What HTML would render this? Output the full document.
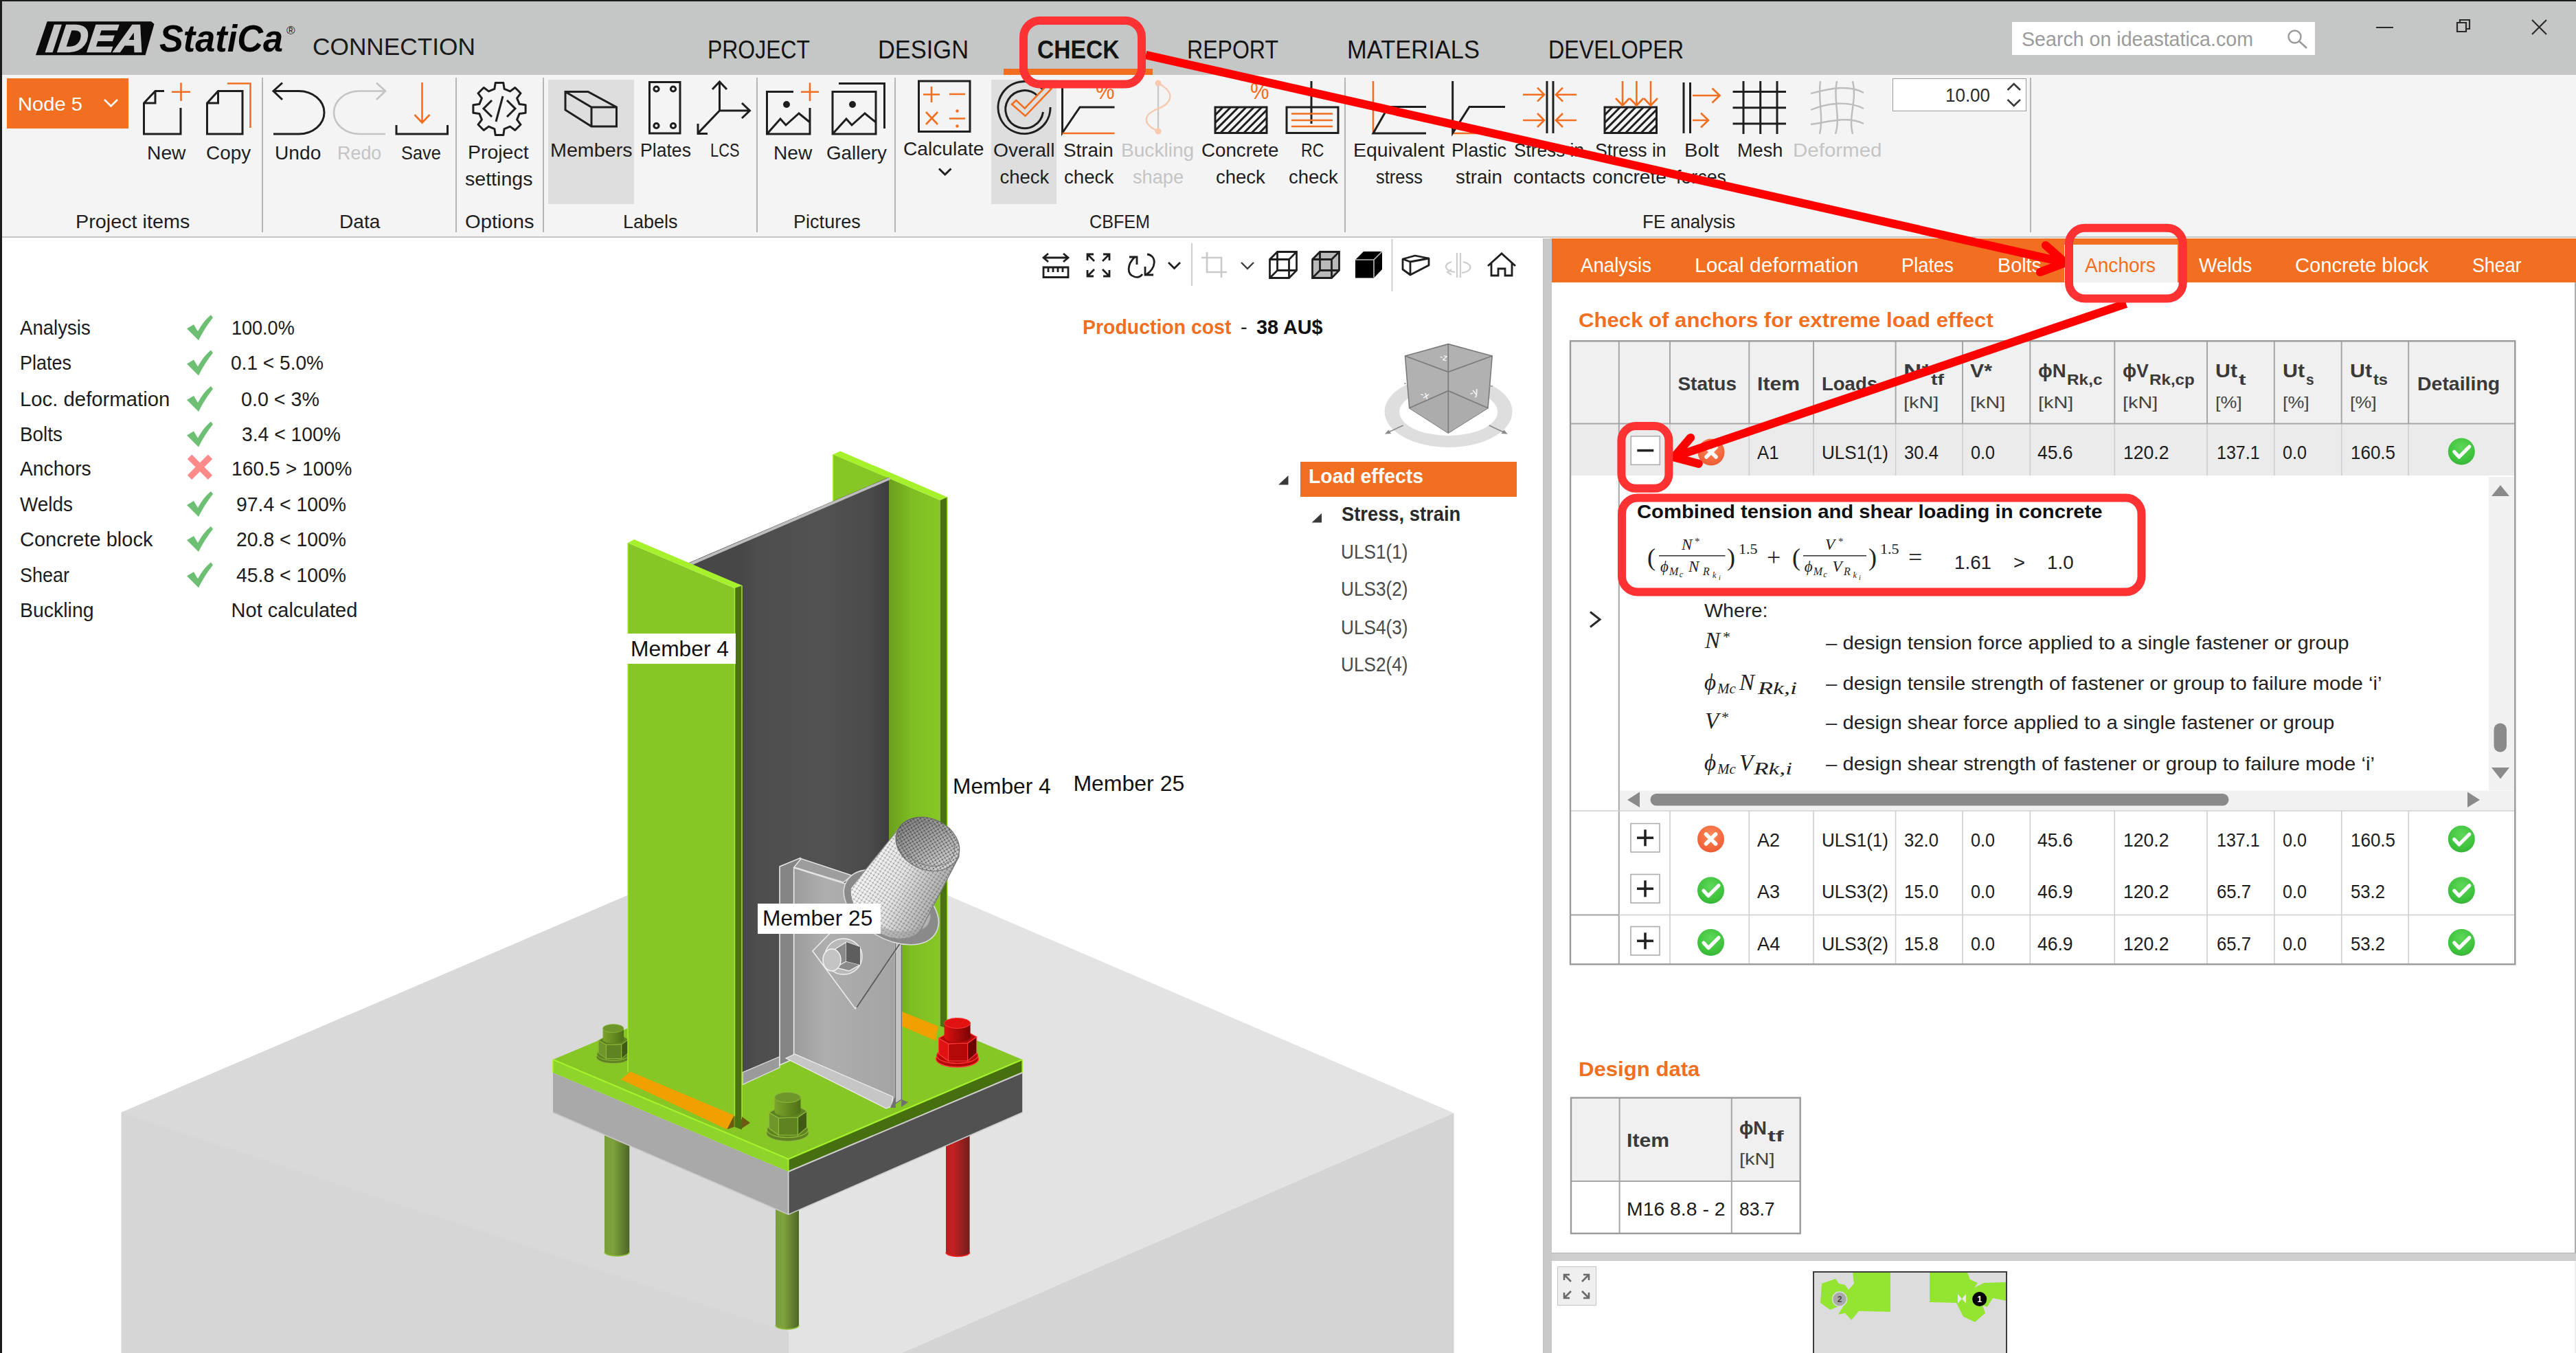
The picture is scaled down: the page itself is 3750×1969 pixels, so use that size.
<!DOCTYPE html>
<html lang="en">
<head>
<meta charset="utf-8">
<title>IDEA StatiCa Connection - Check - Anchors</title>
<style>
html,body{margin:0;padding:0;}
body{width:3750px;height:1969px;overflow:hidden;background:#fff;position:relative;font-family:'Liberation Sans', sans-serif;}
.a{position:absolute;box-sizing:border-box;}
.t{position:absolute;white-space:pre;line-height:1;transform-origin:0 0;}
svg{position:absolute;overflow:visible;}

</style>
</head>
<body>
<div class="a" style="left:0px;top:0px;width:3750px;height:1969px;background:#ffffff;"></div>
<div class="a" style="left:0px;top:0px;width:3750px;height:109px;background:#c5c7c6;"></div>
<div class="a" style="left:0px;top:109px;width:3750px;height:236px;background:#f4f4f4;"></div>
<div class="a" style="left:0px;top:344.3px;width:3750px;height:2.2px;background:#c6c6c6;"></div>
<svg style="left:0;top:0" width="460" height="109" viewBox="0 0 460 109"><polygon points="68.7,31.2 220,31.2 224.5,35 211.6,80.2 52,80.2" fill="#0a0a0a"/></svg>
<span class="t" style="left:64.5px;top:29.1px;font-family:'Liberation Sans', sans-serif;font-size:55.4px;font-weight:bold;font-style:italic;color:#c5c7c6;transform:skewX(-7deg) scaleX(1.0579);transform-origin:0 100%;-webkit-text-stroke:2.4px #c5c7c6;letter-spacing:1px;">IDEA</span>
<span class="t" style="left:232.0px;top:29.4px;font-family:'Liberation Sans', sans-serif;font-size:55px;font-weight:bold;font-style:italic;color:#050505;transform:scaleX(0.9499);">StatiCa</span>
<span class="t" style="left:417.0px;top:35.6px;font-family:'Liberation Sans', sans-serif;font-size:17px;color:#222;">®</span>
<span class="t" style="left:455.0px;top:50.5px;font-family:'Liberation Sans', sans-serif;font-size:34.5px;color:#1a1a1a;transform:scaleX(1.0219);">CONNECTION</span>
<span class="t" style="left:1030.0px;top:54.5px;font-family:'Liberation Sans', sans-serif;font-size:36.5px;color:#141414;transform:scaleX(0.8746);">PROJECT</span>
<span class="t" style="left:1278.0px;top:54.5px;font-family:'Liberation Sans', sans-serif;font-size:36.5px;color:#141414;transform:scaleX(0.9432);">DESIGN</span>
<span class="t" style="left:1509.5px;top:54.5px;font-family:'Liberation Sans', sans-serif;font-size:36.5px;font-weight:bold;color:#141414;transform:scaleX(0.9207);">CHECK</span>
<span class="t" style="left:1728.0px;top:54.5px;font-family:'Liberation Sans', sans-serif;font-size:36.5px;color:#141414;transform:scaleX(0.8783);">REPORT</span>
<span class="t" style="left:1961.0px;top:54.5px;font-family:'Liberation Sans', sans-serif;font-size:36.5px;color:#141414;transform:scaleX(0.9453);">MATERIALS</span>
<span class="t" style="left:2254.0px;top:54.5px;font-family:'Liberation Sans', sans-serif;font-size:36.5px;color:#141414;transform:scaleX(0.8829);">DEVELOPER</span>
<div class="a" style="left:1461px;top:100px;width:217px;height:9px;background:#f26f21;"></div>
<div class="a" style="left:2929px;top:32px;width:441px;height:47.5px;background:#ffffff;"></div>
<span class="t" style="left:2943.0px;top:41.7px;font-family:'Liberation Sans', sans-serif;font-size:29.5px;color:#9b9b9b;transform:scaleX(0.9694);">Search on ideastatica.com</span>
<svg style="left:3328px;top:41px" width="34" height="32" viewBox="0 0 34 32"><circle cx="12.5" cy="12.5" r="9" fill="none" stroke="#9a9a9a" stroke-width="2.4"/><path d="M19 19 L30 29" stroke="#9a9a9a" stroke-width="2.6" fill="none"/></svg>
<svg style="left:3450px;top:20px" width="270" height="40" viewBox="0 0 270 40"><path d="M9 20 H34" stroke="#2a2a2a" stroke-width="2" fill="none"/><path d="M127 13 H140 V26 H127 Z M131 13 V9 H145 V22 H140" stroke="#2a2a2a" stroke-width="2.2" fill="none"/><path d="M236 9 L257 30 M257 9 L236 30" stroke="#2a2a2a" stroke-width="2.2" fill="none"/></svg>
<div class="a" style="left:10px;top:114px;width:177px;height:73px;background:#f26f21;"></div>
<span class="t" style="left:26.0px;top:138.3px;font-family:'Liberation Sans', sans-serif;font-size:28px;color:#fff;transform:scaleX(1.0410);">Node 5</span>
<div class="a" style="left:798px;top:116px;width:125px;height:181px;background:#dedede;"></div>
<div class="a" style="left:1443px;top:116px;width:95px;height:181px;background:#dedede;"></div>
<div class="a" style="left:381px;top:113px;width:2px;height:225px;background:#b5b5b5;"></div>
<div class="a" style="left:663px;top:113px;width:2px;height:225px;background:#b5b5b5;"></div>
<div class="a" style="left:790px;top:113px;width:2px;height:225px;background:#b5b5b5;"></div>
<div class="a" style="left:1101px;top:113px;width:2px;height:225px;background:#b5b5b5;"></div>
<div class="a" style="left:1302px;top:113px;width:2px;height:225px;background:#b5b5b5;"></div>
<div class="a" style="left:1957px;top:113px;width:2px;height:225px;background:#b5b5b5;"></div>
<div class="a" style="left:2954.5px;top:113px;width:2px;height:225px;background:#b5b5b5;"></div>
<div class="a" style="left:2755px;top:114px;width:195px;height:47.5px;background:#fff;border:1.6px solid #9c9c9c;"></div>
<span class="t" style="left:2832.0px;top:124.7px;font-family:'Liberation Sans', sans-serif;font-size:27.5px;color:#2b2b2b;transform:scaleX(0.9444);">10.00</span>
<span class="t" style="left:214.0px;top:208.7px;font-family:'Liberation Sans', sans-serif;font-size:27.5px;color:#1e1e1e;transform:scaleX(1.0270);">New</span>
<span class="t" style="left:299.6px;top:208.7px;font-family:'Liberation Sans', sans-serif;font-size:27.5px;color:#1e1e1e;transform:scaleX(1.0140);">Copy</span>
<span class="t" style="left:400.0px;top:208.7px;font-family:'Liberation Sans', sans-serif;font-size:27.5px;color:#1e1e1e;transform:scaleX(1.0236);">Undo</span>
<span class="t" style="left:490.5px;top:208.7px;font-family:'Liberation Sans', sans-serif;font-size:27.5px;color:#c4c4c4;transform:scaleX(0.9779);">Redo</span>
<span class="t" style="left:584.0px;top:208.7px;font-family:'Liberation Sans', sans-serif;font-size:27.5px;color:#1e1e1e;transform:scaleX(0.9252);">Save</span>
<span class="t" style="left:110.4px;top:308.7px;font-family:'Liberation Sans', sans-serif;font-size:27.5px;color:#1e1e1e;transform:scaleX(1.0463);">Project items</span>
<span class="t" style="left:494.0px;top:308.7px;font-family:'Liberation Sans', sans-serif;font-size:27.5px;color:#1e1e1e;transform:scaleX(1.0225);">Data</span>
<span class="t" style="left:681.4px;top:208.1px;font-family:'Liberation Sans', sans-serif;font-size:27.5px;color:#1e1e1e;transform:scaleX(1.0351);">Project</span>
<span class="t" style="left:677.0px;top:247.2px;font-family:'Liberation Sans', sans-serif;font-size:27.5px;color:#1e1e1e;transform:scaleX(1.0392);">settings</span>
<span class="t" style="left:677.0px;top:308.7px;font-family:'Liberation Sans', sans-serif;font-size:27.5px;color:#1e1e1e;transform:scaleX(1.0603);">Options</span>
<span class="t" style="left:800.7px;top:205.3px;font-family:'Liberation Sans', sans-serif;font-size:27.5px;color:#1e1e1e;transform:scaleX(1.0435);">Members</span>
<span class="t" style="left:932.0px;top:205.3px;font-family:'Liberation Sans', sans-serif;font-size:27.5px;color:#1e1e1e;transform:scaleX(0.9681);">Plates</span>
<span class="t" style="left:1033.5px;top:205.3px;font-family:'Liberation Sans', sans-serif;font-size:27.5px;color:#1e1e1e;transform:scaleX(0.7944);">LCS</span>
<span class="t" style="left:1125.7px;top:208.7px;font-family:'Liberation Sans', sans-serif;font-size:27.5px;color:#1e1e1e;transform:scaleX(1.0233);">New</span>
<span class="t" style="left:1203.0px;top:208.7px;font-family:'Liberation Sans', sans-serif;font-size:27.5px;color:#1e1e1e;transform:scaleX(1.0102);">Gallery</span>
<span class="t" style="left:907.0px;top:308.7px;font-family:'Liberation Sans', sans-serif;font-size:27.5px;color:#1e1e1e;transform:scaleX(0.9821);">Labels</span>
<span class="t" style="left:1154.8px;top:308.7px;font-family:'Liberation Sans', sans-serif;font-size:27.5px;color:#1e1e1e;transform:scaleX(0.9845);">Pictures</span>
<span class="t" style="left:1314.6px;top:203.0px;font-family:'Liberation Sans', sans-serif;font-size:27.5px;color:#1e1e1e;transform:scaleX(1.0239);">Calculate</span>
<span class="t" style="left:1446.0px;top:205.3px;font-family:'Liberation Sans', sans-serif;font-size:27.5px;color:#1e1e1e;transform:scaleX(1.0263);">Overall</span>
<span class="t" style="left:1455.5px;top:243.7px;font-family:'Liberation Sans', sans-serif;font-size:27.5px;color:#1e1e1e;">check</span>
<span class="t" style="left:1547.7px;top:205.3px;font-family:'Liberation Sans', sans-serif;font-size:27.5px;color:#1e1e1e;transform:scaleX(1.0119);">Strain</span>
<span class="t" style="left:1549.4px;top:243.7px;font-family:'Liberation Sans', sans-serif;font-size:27.5px;color:#1e1e1e;transform:scaleX(1.0064);">check</span>
<span class="t" style="left:1632.4px;top:205.3px;font-family:'Liberation Sans', sans-serif;font-size:27.5px;color:#c4c4c4;transform:scaleX(1.0216);">Buckling</span>
<span class="t" style="left:1649.0px;top:243.7px;font-family:'Liberation Sans', sans-serif;font-size:27.5px;color:#c4c4c4;transform:scaleX(0.9875);">shape</span>
<span class="t" style="left:1749.0px;top:205.3px;font-family:'Liberation Sans', sans-serif;font-size:27.5px;color:#1e1e1e;transform:scaleX(1.0081);">Concrete</span>
<span class="t" style="left:1770.0px;top:243.7px;font-family:'Liberation Sans', sans-serif;font-size:27.5px;color:#1e1e1e;">check</span>
<span class="t" style="left:1893.7px;top:205.3px;font-family:'Liberation Sans', sans-serif;font-size:27.5px;color:#1e1e1e;transform:scaleX(0.8381);">RC</span>
<span class="t" style="left:1876.0px;top:243.7px;font-family:'Liberation Sans', sans-serif;font-size:27.5px;color:#1e1e1e;">check</span>
<span class="t" style="left:1586.0px;top:308.7px;font-family:'Liberation Sans', sans-serif;font-size:27.5px;color:#1e1e1e;transform:scaleX(0.9143);">CBFEM</span>
<span class="t" style="left:1970.0px;top:205.3px;font-family:'Liberation Sans', sans-serif;font-size:27.5px;color:#1e1e1e;transform:scaleX(1.0355);">Equivalent</span>
<span class="t" style="left:2003.0px;top:243.7px;font-family:'Liberation Sans', sans-serif;font-size:27.5px;color:#1e1e1e;transform:scaleX(0.9271);">stress</span>
<span class="t" style="left:2113.0px;top:205.3px;font-family:'Liberation Sans', sans-serif;font-size:27.5px;color:#1e1e1e;transform:scaleX(0.9877);">Plastic</span>
<span class="t" style="left:2119.0px;top:243.7px;font-family:'Liberation Sans', sans-serif;font-size:27.5px;color:#1e1e1e;transform:scaleX(1.0112);">strain</span>
<span class="t" style="left:2204.0px;top:205.3px;font-family:'Liberation Sans', sans-serif;font-size:27.5px;color:#1e1e1e;transform:scaleX(0.9534);">Stress in</span>
<span class="t" style="left:2202.7px;top:243.7px;font-family:'Liberation Sans', sans-serif;font-size:27.5px;color:#1e1e1e;transform:scaleX(1.0232);">contacts</span>
<span class="t" style="left:2322.0px;top:205.3px;font-family:'Liberation Sans', sans-serif;font-size:27.5px;color:#1e1e1e;transform:scaleX(0.9693);">Stress in</span>
<span class="t" style="left:2318.0px;top:243.7px;font-family:'Liberation Sans', sans-serif;font-size:27.5px;color:#1e1e1e;transform:scaleX(1.0238);">concrete</span>
<span class="t" style="left:2451.5px;top:205.3px;font-family:'Liberation Sans', sans-serif;font-size:27.5px;color:#1e1e1e;transform:scaleX(1.0614);">Bolt</span>
<span class="t" style="left:2440.0px;top:243.7px;font-family:'Liberation Sans', sans-serif;font-size:27.5px;color:#1e1e1e;transform:scaleX(0.9748);">forces</span>
<span class="t" style="left:2529.0px;top:205.3px;font-family:'Liberation Sans', sans-serif;font-size:27.5px;color:#1e1e1e;transform:scaleX(0.9874);">Mesh</span>
<span class="t" style="left:2610.0px;top:205.3px;font-family:'Liberation Sans', sans-serif;font-size:27.5px;color:#c4c4c4;transform:scaleX(1.0725);">Deformed</span>
<span class="t" style="left:2390.5px;top:308.7px;font-family:'Liberation Sans', sans-serif;font-size:27.5px;color:#1e1e1e;transform:scaleX(0.9498);">FE analysis</span>
<span class="t" style="left:1594.5px;top:116.1px;font-family:'Liberation Sans', sans-serif;font-size:33px;color:#f26f21;transform:scaleX(0.9372);">%</span>
<span class="t" style="left:1819.5px;top:116.1px;font-family:'Liberation Sans', sans-serif;font-size:33px;color:#f26f21;transform:scaleX(0.9372);">%</span>
<svg style="left:0;top:0" width="3750" height="346" viewBox="0 0 3750 346" fill="none" stroke-linecap="butt" stroke-linejoin="miter"><path d="M152 145 L161.5 154.5 L171 145" stroke="#fff" stroke-width="2.6"/><path d="M239 132.5 H226 L209.5 150 V195 H263 V157 M226 132.5 V150 H209.5" stroke="#1e1e1e" stroke-width="3"/><path d="M263.5 120.5 V147 M250 133.7 H277" stroke="#f26f21" stroke-width="2.6"/><path d="M317.5 132.5 H353 V195 H301.5 V150 Z M317.5 132.5 V150 H301.5" stroke="#1e1e1e" stroke-width="3"/><path d="M331 121.5 H364.5 V186" stroke="#f26f21" stroke-width="2.6"/><path d="M398 195 H435 A37 31.25 0 0 0 435 132.5 H398 M411 120.5 L398 132.5 L411 145" stroke="#1e1e1e" stroke-width="3"/><path d="M561 195 H523 A37 31.25 0 0 1 523 132.5 H561 M548 120.5 L561 132.5 L548 145" stroke="#c4c4c4" stroke-width="2.6"/><path d="M577 182 V195 H651.5 V182" stroke="#1e1e1e" stroke-width="3"/><path d="M614.5 120 V178 M603.5 167 L614.5 178.5 L625.5 167" stroke="#f26f21" stroke-width="2.6"/><path d="M719.9 129.4 L721.2 120.4 L732.8 120.4 L734.1 129.4 L742.6 132.9 L749.8 127.5 L758.0 135.7 L752.6 142.9 L756.1 151.4 L765.1 152.7 L765.1 164.3 L756.1 165.6 L752.6 174.1 L758.0 181.3 L749.8 189.5 L742.6 184.1 L734.1 187.6 L732.8 196.6 L721.2 196.6 L719.9 187.6 L711.4 184.1 L704.2 189.5 L696.0 181.3 L701.4 174.1 L697.9 165.6 L688.9 164.3 L688.9 152.7 L697.9 151.4 L701.4 142.9 L696.0 135.7 L704.2 127.5 L711.4 132.9 Z" stroke="#1e1e1e" stroke-width="3" stroke-linejoin="round"/><path d="M716 146 L704 158 L716 170 M738 146 L750 158 L738 170 M732 140 L722 177" stroke="#1e1e1e" stroke-width="3" stroke-width="2.6"/><path d="M823 133.5 H856 L897.5 156 V184 H861 L823 160 Z M823 133.5 L861 156 H897.5 M861 156 V184" stroke="#1e1e1e" stroke-width="3"/><path d="M945.5 119.5 H990 V194 H945.5 Z" stroke="#1e1e1e" stroke-width="3"/><circle cx="955.5" cy="129.5" r="3.6" stroke="#1e1e1e" stroke-width="3" stroke-width="2"/><circle cx="980" cy="129.5" r="3.6" stroke="#1e1e1e" stroke-width="3" stroke-width="2"/><circle cx="955.5" cy="183" r="3.6" stroke="#1e1e1e" stroke-width="3" stroke-width="2"/><circle cx="980" cy="183" r="3.6" stroke="#1e1e1e" stroke-width="3" stroke-width="2"/><path d="M1047.5 119 V161 H1091 M1037 130 L1047.5 119 L1058 130 M1080 150 L1091.5 161 L1080 172 M1047.5 161 L1016 194 M1016 180 V194.5 H1030" stroke="#1e1e1e" stroke-width="3"/><path d="M1155 133.5 H1116.5 V195 H1179 V157 M1116.5 195 L1136 173 L1144 182 L1163 165 L1179 178" stroke="#1e1e1e" stroke-width="3"/><circle cx="1145" cy="152" r="5" fill="#1e1e1e"/><path d="M1179 120.5 V147 M1166 133.7 H1192" stroke="#f26f21" stroke-width="2.6"/><path d="M1212 133.5 H1275 V195 H1212 Z M1212 195 L1232 173 L1240 182 L1259 165 L1275 178" stroke="#1e1e1e" stroke-width="3"/><circle cx="1241" cy="152" r="5" fill="#1e1e1e"/><path d="M1221 121.5 H1287.5 V187" stroke="#1e1e1e" stroke-width="3" stroke-width="2.6"/><path d="M1337.5 118 H1412 V191.5 H1337.5 Z" stroke="#1e1e1e" stroke-width="3"/><path d="M1356 126 V149 M1344 137.5 H1368 M1382 137 H1405 M1348 163 L1365 181 M1365 163 L1348 181 M1382 172.5 H1405" stroke="#f26f21" stroke-width="2.6"/><circle cx="1393.5" cy="161.5" r="2.2" fill="#f26f21"/><circle cx="1393.5" cy="183.5" r="2.2" fill="#f26f21"/><path d="M1367 245.5 L1375.7 254 L1384.5 245.5" stroke="#1e1e1e" stroke-width="3" stroke-width="2.6"/><path d="M1520 132 A38 38 0 1 0 1529 156" stroke="#1e1e1e" stroke-width="3"/><path d="M1510 139 A27.5 27.5 0 1 0 1518.5 163" stroke="#1e1e1e" stroke-width="3"/><path d="M1473 151.7 L1492.6 168.8 L1530.4 129.3 L1524 124.3 L1491.8 157.6 L1479.2 146 Z" stroke="#f26f21" stroke-width="2.6" fill="#dedede" stroke-linejoin="miter"/><path d="M1546.5 117 V193.5 L1572 156 H1622.5" stroke="#1e1e1e" stroke-width="3"/><path d="M1546.5 194 H1622.5" stroke="#f26f21" stroke-width="2.6"/><path d="M1686 121 V191" stroke="#c9c9c9" stroke-width="2.4"/><path d="M1686 121 C1712 135 1706 150 1686 158 C1664 167 1662 180 1686 191" stroke="#f7c9ae" stroke-width="2.4"/><circle cx="1686" cy="121" r="4.5" fill="#f7c9ae"/><circle cx="1686" cy="191" r="4.5" fill="#f7c9ae"/><clipPath id="hc1"><rect x="1769" y="156" width="75" height="37.5"/></clipPath><g clip-path="url(#hc1)" stroke="#1e1e1e" stroke-width="3" stroke-width="2.4"><path d="M1731.5 193.5 L1769.0 156"/><path d="M1742.8 193.5 L1780.3 156"/><path d="M1754.1 193.5 L1791.6 156"/><path d="M1765.4 193.5 L1802.9 156"/><path d="M1776.7 193.5 L1814.2 156"/><path d="M1788.0 193.5 L1825.5 156"/><path d="M1799.3 193.5 L1836.8 156"/><path d="M1810.6 193.5 L1848.1 156"/><path d="M1821.9 193.5 L1859.4 156"/><path d="M1833.2 193.5 L1870.7 156"/></g><rect x="1769" y="156" width="75" height="37.5" stroke="#1e1e1e" stroke-width="3"/><rect x="1873" y="156" width="75" height="37.5" stroke="#1e1e1e" stroke-width="3"/><path d="M1909 118 V180" stroke="#1e1e1e" stroke-width="3"/><path d="M1880 165.5 H1940 M1880 175 H1940 M1880 184 H1940" stroke="#f26f21" stroke-width="2.6"/><path d="M1999 118 V194" stroke="#f26f21" stroke-width="2.6"/><path d="M2076 194 H1999 L2021 155.5 H2076" stroke="#1e1e1e" stroke-width="3"/><path d="M2114 194 H2190" stroke="#f26f21" stroke-width="2.6"/><path d="M2114.7 118 V193.5 L2139 155.5 H2191" stroke="#1e1e1e" stroke-width="3"/><path d="M2252 118 V194 M2261 118 V194" stroke="#1e1e1e" stroke-width="3"/><path d="M2217 137.7 H2248 M2238 127.69999999999999 L2248 137.7 L2238 147.7 M2295 137.7 H2265 M2275 127.69999999999999 L2265 137.7 L2275 147.7" stroke="#f26f21" stroke-width="2.6"/><path d="M2217 175 H2248 M2238 165 L2248 175 L2238 185 M2295 175 H2265 M2275 165 L2265 175 L2275 185" stroke="#f26f21" stroke-width="2.6"/><clipPath id="hc2"><rect x="2336" y="156" width="75.5" height="37.5"/></clipPath><g clip-path="url(#hc2)" stroke="#1e1e1e" stroke-width="3" stroke-width="2.4"><path d="M2298.5 193.5 L2336.0 156"/><path d="M2309.8 193.5 L2347.3 156"/><path d="M2321.1 193.5 L2358.6 156"/><path d="M2332.4 193.5 L2369.9 156"/><path d="M2343.7 193.5 L2381.2 156"/><path d="M2355.0 193.5 L2392.5 156"/><path d="M2366.3 193.5 L2403.8 156"/><path d="M2377.6 193.5 L2415.1 156"/><path d="M2388.9 193.5 L2426.4 156"/><path d="M2400.2 193.5 L2437.7 156"/></g><rect x="2336" y="156" width="75.5" height="37.5" stroke="#1e1e1e" stroke-width="3"/><path d="M2362 118 V153 M2352 143 L2362 153.5 L2372 143" stroke="#f26f21" stroke-width="2.6"/><path d="M2382.4 118 V153 M2372.4 143 L2382.4 153.5 L2392.4 143" stroke="#f26f21" stroke-width="2.6"/><path d="M2403 118 V153 M2393 143 L2403 153.5 L2413 143" stroke="#f26f21" stroke-width="2.6"/><path d="M2451 120 V194 M2460.5 120 V194" stroke="#1e1e1e" stroke-width="3"/><path d="M2464 139 H2503 M2492.5 128.5 L2503.5 139 L2492.5 149.5 M2464 175 H2486.5 M2476 164.5 L2487 175 L2476 185.5" stroke="#f26f21" stroke-width="2.6"/><path d="M2538 118 V195 M2562.7 118 V195 M2587 118 V195 M2522.5 133.5 H2600 M2522.5 156.7 H2600 M2522.5 180 H2600" stroke="#1e1e1e" stroke-width="3" stroke-width="3.4"/><path d="M2650 118 C2646 145 2655 170 2649 195 M2674 118 C2668 145 2680 170 2672 195 M2697 118 C2704 145 2690 170 2697 195 M2636 136 C2660 130 2690 122 2713 135 M2636 160 C2660 150 2690 146 2713 158 M2636 181 C2660 178 2690 168 2713 180" stroke="#bdbdbd" stroke-width="2.4"/><path d="M2922.5 131 L2931.7 122 L2941 131 M2922.5 145 L2931.7 154 L2941 145" stroke="#3a3a3a" stroke-width="2.6"/></svg>
<div class="a" style="left:2245.5px;top:347px;width:13.5px;height:1622px;background:#c9c9c9;"></div>
<div class="a" style="left:2245.5px;top:347px;width:1.5px;height:1622px;background:#bdbdbd;"></div>
<svg style="left:0;top:0" width="3750" height="1969" viewBox="0 0 3750 1969" fill="none"><path d="M1735 354 V416 M2026.5 348 V424" stroke="#cfcfcf" stroke-width="2"/><path d="M1519 375 H1555 M1526 369 L1519 375 L1526 381 M1548 369 L1555 375 L1548 381" stroke="#1e1e1e" stroke-width="2.8" stroke-width="2.4"/><path d="M1519 389 H1555 V403.5 H1519 Z M1526 389 V396 M1533 389 V396 M1540 389 V396 M1547 389 V396" stroke="#1e1e1e" stroke-width="2.8" stroke-width="2.6"/><path d="M1583 379 V370 H1592 M1583.5 370.5 L1593 380 M1606 370 H1615 V379 M1614.5 370.5 L1605 380 M1583 393 V402 H1592 M1583.5 401.5 L1593 392 M1606 402 H1615 V393 M1614.5 401.5 L1605 392" stroke="#1e1e1e" stroke-width="2.8" stroke-width="2.4"/><path d="M1653 373 C1640 385 1640 400 1652 403 C1657 404 1661 402 1663 399 M1644 374 H1655 V385 M1670 370 C1684 372 1684 390 1668 400 M1679 400 H1667 V388" stroke="#1e1e1e" stroke-width="2.8" stroke-width="2.6"/><path d="M1701 382 L1709.5 390.5 L1718 382" stroke="#1e1e1e" stroke-width="2.8" stroke-width="2.4"/><path d="M1757 367 V396 H1786 M1749 375 H1778 V404" stroke="#c9c9c9" stroke-width="2.6"/><path d="M1807 382 L1816 391 L1825 382" stroke="#3c3c3c" stroke-width="2.4"/><path d="M1848.5 377.5 L1859.5 366.5 H1887.5 V393.5 L1876.5 404.5 H1848.5 Z" fill="none" stroke="#1e1e1e" stroke-width="2.8" stroke-width="2.4"/><path d="M1848.5 377.5 H1876.5 V404.5 M1876.5 377.5 L1887.5 366.5" stroke="#1e1e1e" stroke-width="2.8" stroke-width="2.4"/><path d="M1859.5 366.5 V393.5 H1887.5 M1859.5 393.5 L1848.5 404.5" stroke="#1e1e1e" stroke-width="2.8" stroke-width="1.8"/><path d="M1910.5 377.5 L1921.5 366.5 H1949.5 V393.5 L1938.5 404.5 H1910.5 Z" fill="#b9b9b9" stroke="#1e1e1e" stroke-width="2.8" stroke-width="2.4"/><path d="M1910.5 377.5 H1938.5 V404.5 M1938.5 377.5 L1949.5 366.5" stroke="#1e1e1e" stroke-width="2.8" stroke-width="2.4"/><path d="M1921.5 366.5 V393.5 H1949.5 M1921.5 393.5 L1910.5 404.5" stroke="#1e1e1e" stroke-width="2.8" stroke-width="1.8"/><path d="M1973 378 L1985 366 H2012 V392 L2000 404.5 H1973 Z" fill="#000"/><path d="M1973 378 H2000 V404 M2000 378 L2012 366" stroke="#bbb" stroke-width="1.6"/><path d="M2042 377 L2060 372 L2080 376 V386 L2053 400 L2042 392 Z M2042 377 L2053 381 L2080 376 M2053 381 V400" stroke="#1e1e1e" stroke-width="2.8" stroke-width="2.6" stroke-linejoin="round"/><path d="M2121 368 V404 M2126 368 V404 M2113 381 C2098 386 2106 395 2118 396 M2130 381 C2148 386 2140 396 2128 397 M2113 392 L2107 396 L2113 400" stroke="#cdcdcd" stroke-width="2.2"/><path d="M2166 387 L2186 369 L2206 387 M2171 383 V401 H2181 V391 H2191 V401 H2201 V383" stroke="#1e1e1e" stroke-width="2.8" stroke-width="2.6"/><path d="M272 478.3 L282 472.3 L288 482.3 Q296 467.3 307 458.3 L310 462.3 Q298 477.3 289 495.3 Z" fill="#6dbf73"/><path d="M272 529.5 L282 523.5 L288 533.5 Q296 518.5 307 509.5 L310 513.5 Q298 528.5 289 546.5 Z" fill="#6dbf73"/><path d="M272 582 L282 576 L288 586 Q296 571 307 562 L310 566 Q298 581 289 599 Z" fill="#6dbf73"/><path d="M272 633.4 L282 627.4 L288 637.4 Q296 622.4 307 613.4 L310 617.4 Q298 632.4 289 650.4 Z" fill="#6dbf73"/><path d="M276 664.7 L306 694.7 M306 664.7 L276 694.7" stroke="#ff8a8a" stroke-width="9"/><path d="M272 735 L282 729 L288 739 Q296 724 307 715 L310 719 Q298 734 289 752 Z" fill="#6dbf73"/><path d="M272 786 L282 780 L288 790 Q296 775 307 766 L310 770 Q298 785 289 803 Z" fill="#6dbf73"/><path d="M272 838.3 L282 832.3 L288 842.3 Q296 827.3 307 818.3 L310 822.3 Q298 837.3 289 855.3 Z" fill="#6dbf73"/><path d="M1875.5 692 V705.5 H1861 Z M1924 747 V760.5 H1909.5 Z" fill="#3a3a3a"/><ellipse cx="2108.6" cy="599" rx="93" ry="52" fill="#dedede"/><ellipse cx="2108.6" cy="599.5" rx="71.5" ry="34.5" fill="#fff"/><path d="M2045.5 518.1 L2108.3 500.7 L2172.2 518.1 L2166 593.8 L2108.3 630 L2051.7 593.8 Z" fill="#b1b1b1" stroke="#7a7a7a" stroke-width="1.6"/><path d="M2051.7 593.8 L2108.3 568.7 L2166 593.8 L2108.3 630 Z" fill="#acacac"/><path d="M2045.5 518.1 L2108.3 541.3 L2172.2 518.1 M2108.3 500.7 V630 M2051.7 593.8 L2108.3 568.7 L2166 593.8" stroke="#7a7a7a" stroke-width="1.6"/><path d="M2042.8 619 L2019 630 M2017.7 630.8 l6 -0.5 l-2.5 -3.5 Z M2167.7 619 L2191 630 M2192.9 630.8 l-6 -0.5 l2.5 -3.5 Z" stroke="#8a8a8a" stroke-width="1.6" fill="#8a8a8a"/><path d="M2047 558 h-3 M2168 562 h5" stroke="#999" stroke-width="1.4"/></svg>
<span class="t" style="left:2098.0px;top:512.0px;font-family:'Liberation Sans', sans-serif;font-size:13px;color:#fff;transform:rotate(14deg);">-z</span>
<span class="t" style="left:2071.0px;top:565.3px;font-family:'Liberation Sans', sans-serif;font-size:15px;color:#fff;transform:rotate(20deg);">-x</span>
<span class="t" style="left:2137.0px;top:565.3px;font-family:'Liberation Sans', sans-serif;font-size:15px;color:#fff;transform:rotate(-18deg);">-y</span>
<span class="t" style="left:29.0px;top:462.8px;font-family:'Liberation Sans', sans-serif;font-size:29px;color:#1c1c1c;transform:scaleX(0.9509);">Analysis</span>
<span class="t" style="left:336.6px;top:462.8px;font-family:'Liberation Sans', sans-serif;font-size:29px;color:#1c1c1c;transform:scaleX(0.9323);">100.0%</span>
<span class="t" style="left:29.0px;top:514.0px;font-family:'Liberation Sans', sans-serif;font-size:29px;color:#1c1c1c;transform:scaleX(0.9304);">Plates</span>
<span class="t" style="left:335.6px;top:514.0px;font-family:'Liberation Sans', sans-serif;font-size:29px;color:#1c1c1c;transform:scaleX(0.9687);">0.1 &lt; 5.0%</span>
<span class="t" style="left:29.0px;top:566.5px;font-family:'Liberation Sans', sans-serif;font-size:29px;color:#1c1c1c;transform:scaleX(1.0106);">Loc. deformation</span>
<span class="t" style="left:351.0px;top:566.5px;font-family:'Liberation Sans', sans-serif;font-size:29px;color:#1c1c1c;transform:scaleX(0.9889);">0.0 &lt; 3%</span>
<span class="t" style="left:29.0px;top:617.9px;font-family:'Liberation Sans', sans-serif;font-size:29px;color:#1c1c1c;transform:scaleX(0.9615);">Bolts</span>
<span class="t" style="left:352.0px;top:617.9px;font-family:'Liberation Sans', sans-serif;font-size:29px;color:#1c1c1c;transform:scaleX(0.9760);">3.4 &lt; 100%</span>
<span class="t" style="left:29.0px;top:668.2px;font-family:'Liberation Sans', sans-serif;font-size:29px;color:#1c1c1c;transform:scaleX(0.9747);">Anchors</span>
<span class="t" style="left:336.6px;top:668.2px;font-family:'Liberation Sans', sans-serif;font-size:29px;color:#1c1c1c;transform:scaleX(0.9755);">160.5 &gt; 100%</span>
<span class="t" style="left:29.0px;top:719.5px;font-family:'Liberation Sans', sans-serif;font-size:29px;color:#1c1c1c;transform:scaleX(0.9605);">Welds</span>
<span class="t" style="left:344.0px;top:719.5px;font-family:'Liberation Sans', sans-serif;font-size:29px;color:#1c1c1c;transform:scaleX(0.9776);">97.4 &lt; 100%</span>
<span class="t" style="left:29.0px;top:770.5px;font-family:'Liberation Sans', sans-serif;font-size:29px;color:#1c1c1c;">Concrete block</span>
<span class="t" style="left:344.0px;top:770.5px;font-family:'Liberation Sans', sans-serif;font-size:29px;color:#1c1c1c;transform:scaleX(0.9776);">20.8 &lt; 100%</span>
<span class="t" style="left:29.0px;top:822.8px;font-family:'Liberation Sans', sans-serif;font-size:29px;color:#1c1c1c;transform:scaleX(0.9303);">Shear</span>
<span class="t" style="left:344.0px;top:822.8px;font-family:'Liberation Sans', sans-serif;font-size:29px;color:#1c1c1c;transform:scaleX(0.9776);">45.8 &lt; 100%</span>
<span class="t" style="left:29.0px;top:874.0px;font-family:'Liberation Sans', sans-serif;font-size:29px;color:#1c1c1c;transform:scaleX(0.9815);">Buckling</span>
<span class="t" style="left:336.6px;top:874.0px;font-family:'Liberation Sans', sans-serif;font-size:29px;color:#1c1c1c;">Not calculated</span>
<span class="t" style="left:1576.0px;top:461.8px;font-family:'Liberation Sans', sans-serif;font-size:29px;font-weight:bold;color:#f26f21;transform:scaleX(0.9804);">Production cost</span>
<span class="t" style="left:1806.0px;top:461.8px;font-family:'Liberation Sans', sans-serif;font-size:29px;color:#222;">-</span>
<span class="t" style="left:1829.0px;top:461.8px;font-family:'Liberation Sans', sans-serif;font-size:29px;font-weight:bold;color:#111;transform:scaleX(0.9932);">38 AU$</span>
<div class="a" style="left:1892.5px;top:671.7px;width:315px;height:51.7px;background:#f26f21;"></div>
<span class="t" style="left:1905.0px;top:678.9px;font-family:'Liberation Sans', sans-serif;font-size:29px;font-weight:bold;color:#fff;transform:scaleX(0.9776);">Load effects</span>
<span class="t" style="left:1953.4px;top:733.5px;font-family:'Liberation Sans', sans-serif;font-size:29px;font-weight:bold;color:#2a2a2a;transform:scaleX(0.9425);">Stress, strain</span>
<span class="t" style="left:1951.5px;top:788.5px;font-family:'Liberation Sans', sans-serif;font-size:29px;color:#4a4a4a;transform:scaleX(0.9028);">ULS1(1)</span>
<span class="t" style="left:1951.5px;top:843.3px;font-family:'Liberation Sans', sans-serif;font-size:29px;color:#4a4a4a;transform:scaleX(0.9028);">ULS3(2)</span>
<span class="t" style="left:1951.5px;top:898.5px;font-family:'Liberation Sans', sans-serif;font-size:29px;color:#4a4a4a;transform:scaleX(0.9028);">ULS4(3)</span>
<span class="t" style="left:1951.5px;top:953.1px;font-family:'Liberation Sans', sans-serif;font-size:29px;color:#4a4a4a;transform:scaleX(0.9028);">ULS2(4)</span>
<svg style="left:0;top:0" width="3750" height="1969" viewBox="0 0 3750 1969" fill="none"><defs><clipPath id="vp"><rect x="2" y="347" width="2243.5" height="1622"/></clipPath><linearGradient id="gWeb" x1="1080" x2="1294" y1="0" y2="0" gradientUnits="userSpaceOnUse"><stop offset="0" stop-color="#474747"/><stop offset="0.12" stop-color="#4e4e4e"/><stop offset="0.55" stop-color="#525252"/><stop offset="0.88" stop-color="#4a4a4a"/><stop offset="1" stop-color="#3e3e3e"/></linearGradient><linearGradient id="gRF" x1="1294" x2="1369" y1="0" y2="0" gradientUnits="userSpaceOnUse"><stop offset="0" stop-color="#6a9f1c"/><stop offset="0.45" stop-color="#7fbe23"/><stop offset="1" stop-color="#86c725"/></linearGradient><linearGradient id="gRodG" x1="0" x2="1" y1="0" y2="0"><stop offset="0" stop-color="#7a9d3a"/><stop offset="0.35" stop-color="#7fa23c"/><stop offset="1" stop-color="#4c6626"/></linearGradient><linearGradient id="gRodR" x1="0" x2="1" y1="0" y2="0"><stop offset="0" stop-color="#b81f1f"/><stop offset="0.3" stop-color="#c42222"/><stop offset="1" stop-color="#6f1d1d"/></linearGradient><linearGradient id="gTopG" x1="0" x2="1" y1="0" y2="0"><stop offset="0" stop-color="#7ba52b"/><stop offset="1" stop-color="#4f6f18"/></linearGradient><linearGradient id="gTopR" x1="0" x2="1" y1="0" y2="0"><stop offset="0" stop-color="#e01010"/><stop offset="1" stop-color="#7a0505"/></linearGradient><linearGradient id="gStf" x1="1157" x2="1304" y1="0" y2="0" gradientUnits="userSpaceOnUse"><stop offset="0" stop-color="#9c9c9c"/><stop offset="0.3" stop-color="#aeaeae"/><stop offset="1" stop-color="#a4a4a4"/></linearGradient><pattern id="mesh" width="5" height="5" patternUnits="userSpaceOnUse" patternTransform="rotate(33)"><rect width="5" height="5" fill="#f4f4f4"/><path d="M0 0 H5 M0 0 V5" stroke="#7a7a7a" stroke-width="1.05" stroke-dasharray="2.2 1.1"/></pattern><pattern id="mesh2" width="4.5" height="4.5" patternUnits="userSpaceOnUse" patternTransform="rotate(33)"><rect width="4.5" height="4.5" fill="#d9d9d9"/><path d="M0 0 H4.5 M0 0 V4.5" stroke="#555" stroke-width="1.3" stroke-dasharray="2.4 1"/></pattern><linearGradient id="gTube" x1="1262" y1="1255" x2="1372" y2="1305" gradientUnits="userSpaceOnUse"><stop offset="0" stop-color="#000" stop-opacity="0"/><stop offset="0.45" stop-color="#000" stop-opacity="0.06"/><stop offset="1" stop-color="#000" stop-opacity="0.3"/></linearGradient><linearGradient id="gTubeTop" x1="1310" y1="1200" x2="1395" y2="1255" gradientUnits="userSpaceOnUse"><stop offset="0" stop-color="#000" stop-opacity="0.4"/><stop offset="0.6" stop-color="#000" stop-opacity="0.18"/><stop offset="1" stop-color="#000" stop-opacity="0"/></linearGradient></defs><g clip-path="url(#vp)"><path d="M176.5 1619 L1147 1203 V1969 H176.5 Z" fill="#d6d6d6"/><path d="M176.5 1619 L1147 1203 V1938 Z" fill="#d9d9d9"/><path d="M1147 1203 L2116.5 1619.7 L1312.4 1969 H1147 Z" fill="#e3e3e3"/><path d="M2116.5 1619.7 V1969 H1312.4 Z" fill="#d4d4d4"/><path d="M1147 1938 V1969" stroke="#d0d0d0" stroke-width="1.5"/><path d="M880 1640 V1822 A18.149999999999977 6 0 0 0 916.3 1822 V1640 Z" fill="url(#gRodG)"/><path d="M880 1822 A18.149999999999977 6 0 0 0 916.3 1822" stroke="#8fbf3a" stroke-width="1.6"/><path d="M1377 1640 V1822.5 A17.299999999999955 6 0 0 0 1411.6 1822.5 V1640 Z" fill="url(#gRodR)"/><path d="M1377 1822.5 A17.299999999999955 6 0 0 0 1411.6 1822.5" stroke="#ff2020" stroke-width="1.6"/><path d="M1129 1750 V1928.5 A17.0 6 0 0 0 1163 1928.5 V1750 Z" fill="url(#gRodG)"/><path d="M1129 1928.5 A17.0 6 0 0 0 1163 1928.5" stroke="#8fbf3a" stroke-width="1.6"/><path d="M805 1561 L1147.7 1705 V1767.4 L805 1619 Z" fill="#a9a9a9"/><path d="M1147.7 1705 L1488.2 1561 V1619 L1147.7 1767.4 Z" fill="#515151"/><path d="M805 1619 L1147.7 1767.4 L1488.2 1619" stroke="#c9c9c9" stroke-width="1.5"/><path d="M1147.7 1705 V1767" stroke="#d9d9d9" stroke-width="1.6"/><path d="M805 1542 L1147.7 1686.8 V1705 L805 1561 Z" fill="#8fd42a"/><path d="M1147.7 1686.8 L1488.2 1542 V1561 L1147.7 1705 Z" fill="#46700f"/><path d="M1147.7 1705 L1488.2 1561" stroke="#d0d0d0" stroke-width="2"/><path d="M805 1542 L1147 1398.5 L1488.2 1542 L1147.7 1686.8 Z" fill="#86c725"/><path d="M805 1542 L1147.7 1686.8 L1488.2 1542" stroke="#a6f02c" stroke-width="2.2"/><path d="M805 1542 V1561 M1147.7 1687 V1705 M1488.2 1542 V1561" stroke="#a6f02c" stroke-width="1.6"/><g transform="translate(892.8 1519) scale(0.8)"><ellipse cx="0" cy="24" rx="31" ry="12" fill="#5f8222" stroke="#8dbb3a" stroke-width="1.4"/><ellipse cx="0" cy="19" rx="30" ry="11.5" fill="#5f8222" stroke="#8dbb3a" stroke-width="1.2"/><path d="M-27 -6 L-13 2 V27 L-27 17 Z" fill="#6f962a" stroke="#8dbb3a" stroke-width="1.2"/><path d="M-13 2 L15 1 V27 L-13 27 Z" fill="#5f8222" stroke="#8dbb3a" stroke-width="1.2"/><path d="M15 1 L28 -8 V16 L15 27 Z" fill="#3f5a14" stroke="#8dbb3a" stroke-width="1.2"/><path d="M-27 -6 L-13 -14 L14 -16 L28 -8 L15 1 L-13 2 Z" fill="#5f8222" stroke="#8dbb3a" stroke-width="1.2"/><path d="M-19 -28 V-8 A19 7.5 0 0 0 19 -8 V-28 Z" fill="url(#gTopG)"/><ellipse cx="0" cy="-28" rx="19" ry="7.5" fill="#6f962a" stroke="#8dbb3a" stroke-width="1"/></g><path d="M1212.7 661.4 L1368.7 728 V1498 L1212.7 1436 Z" fill="url(#gRF)"/><path d="M1212.7 661.4 L1294 696 V1300 L1212.7 1300 Z" fill="#86c725"/><path d="M1212.7 661.4 L1223 656.4 L1379 723.5 L1368.7 728 Z" fill="#a6f02c"/><path d="M1368.7 728 L1379 723.5 V1497 L1368.7 1493 Z" fill="#4a7212"/><path d="M1379 723.5 V1497" stroke="#a6f02c" stroke-width="1.4"/><path d="M1212.7 661.4 V730" stroke="#a6f02c" stroke-width="1.4"/><path d="M1312.4 1472 L1365.6 1493.3 L1362 1514.6 L1312.4 1493.3 Z" fill="#f0a000"/><path d="M998 821 L1294 694.5 V1500 L1135 1545 L1081 1568 L1080 1568 V852 Z" fill="url(#gWeb)"/><path d="M996 822.5 L1295 694.5 L1296 698 L1001 825 Z" fill="#bdbdbd"/><path d="M1081 1560.7 L1135 1537.7 V1553.6 L1081 1578.4 Z" fill="#9a9a9a" stroke="#dcdcdc" stroke-width="1.4"/><path d="M1135 1261 L1165 1248.6 V1262 L1155.7 1266 V1541 L1135 1550 Z" fill="#858585" stroke="#e6e6e6" stroke-width="1.6"/><path d="M1155.7 1262.8 L1303.5 1309 V1606 L1298 1608.6 L1155.7 1537.7 Z" fill="url(#gStf)" stroke="#e6e6e6" stroke-width="1.6"/><path d="M1303.5 1309 L1312.4 1305 V1600 L1303.5 1606 Z" fill="#c4c4c4" stroke="#6e6e6e" stroke-width="1.2"/><path d="M1144 1540 L1157 1534 L1300 1596 L1298 1610 L1290 1613 Z" fill="#c6c6c6" stroke="#ededed" stroke-width="1.2"/><path d="M1296 1612 L1303 1596 L1304 1612 Z M1312.4 1600 L1322 1604 L1312 1611 Z" fill="#707070"/><path d="M1221 1345 L1183 1384 L1245 1468 L1310 1375" stroke="#ececec" stroke-width="1.6"/><path d="M1247 1466 L1311 1372" stroke="#5a5a5a" stroke-width="2"/><ellipse cx="1228" cy="1392" rx="27" ry="26" fill="#b9b9b9" stroke="#f2f2f2" stroke-width="1.4"/><path d="M1216 1381 L1232 1371 L1252 1378 V1404 L1236 1413 L1216 1408 Z" fill="#8a8a8a" stroke="#f0f0f0" stroke-width="1.3"/><path d="M1232 1371 V1399 L1252 1404 M1232 1399 L1216 1408" stroke="#f0f0f0" stroke-width="1.2"/><path d="M1232 1399 L1252 1404 V1378 L1232 1371 Z" fill="#5e5e5e"/><ellipse cx="1211" cy="1397" rx="13" ry="16" fill="#c4c4c4" stroke="#f4f4f4" stroke-width="1.4"/><path d="M1155.9 1262 L1166.2 1249.5 L1240 1274 L1228 1284 Z" fill="#9d9d9d" stroke="#e6e6e6" stroke-width="1.5"/><g transform="rotate(30 1296.6 1317.3)"><ellipse cx="1298.6" cy="1319.3" rx="75" ry="46" fill="#8a8a8a" stroke="#dcdcdc" stroke-width="1.6"/><ellipse cx="1296.6" cy="1313" rx="61" ry="34" fill="#b5b5b5" stroke="#9a9a9a" stroke-width="1"/></g><path d="M1238.6 1292.4 L1303.8 1211.7 C1318 1180 1400 1200 1395.9 1246.9 L1344.2 1346.2 C1335 1374 1290 1372 1262 1346 C1245 1330 1236 1305 1238.6 1292.4 Z" fill="url(#mesh)" stroke="#8c8c8c" stroke-width="1.2"/><path d="M1238.6 1292.4 L1303.8 1211.7 C1318 1180 1400 1200 1395.9 1246.9 L1344.2 1346.2 C1335 1374 1290 1372 1262 1346 C1245 1330 1236 1305 1238.6 1292.4 Z" fill="url(#gTube)"/><g transform="rotate(25 1350.4 1228.3)"><ellipse cx="1350.4" cy="1228.3" rx="48" ry="37" fill="url(#mesh2)" stroke="#7c7c7c" stroke-width="1.2"/><ellipse cx="1350.4" cy="1228.3" rx="48" ry="37" fill="url(#gTubeTop)"/><ellipse cx="1350.4" cy="1228.3" rx="41" ry="30" fill="none" stroke="#777" stroke-width="1"/></g><path d="M1262 1346 C1290 1372 1335 1374 1344.2 1346.2 L1347 1338 C1338 1362 1292 1362 1264 1336 Z" fill="#9c9c9c" opacity="0.55"/><path d="M914 790 L1069.5 856 V1624.5 L914 1560 Z" fill="#86c725"/><path d="M914 790 L923 785 L1080 852 L1069.5 856 Z" fill="#a6f02c"/><path d="M1069.5 856 L1080 852 V1630 L1069.5 1625 Z" fill="#4a7212"/><path d="M914 790 V1560 M1069.5 856 V1625 M1080 852 V1630" stroke="#a6f02c" stroke-width="1.4"/><path d="M904 1571 L917.6 1559.6 L1068.7 1623 L1058.4 1643.6 Z" fill="#f0a000"/><path d="M1058.4 1643.6 L1068.7 1623 V1640 Z M1080 1625 L1092 1634 L1080 1642 Z" fill="#6b5a10"/><path d="M1069.5 1624 L1080 1629 V1644 L1069.5 1640 Z" fill="#4a7212"/><g transform="translate(1146.5 1625) scale(1.0)"><ellipse cx="0" cy="24" rx="31" ry="12" fill="#5f8222" stroke="#8dbb3a" stroke-width="1.4"/><ellipse cx="0" cy="19" rx="30" ry="11.5" fill="#5f8222" stroke="#8dbb3a" stroke-width="1.2"/><path d="M-27 -6 L-13 2 V27 L-27 17 Z" fill="#6f962a" stroke="#8dbb3a" stroke-width="1.2"/><path d="M-13 2 L15 1 V27 L-13 27 Z" fill="#5f8222" stroke="#8dbb3a" stroke-width="1.2"/><path d="M15 1 L28 -8 V16 L15 27 Z" fill="#3f5a14" stroke="#8dbb3a" stroke-width="1.2"/><path d="M-27 -6 L-13 -14 L14 -16 L28 -8 L15 1 L-13 2 Z" fill="#5f8222" stroke="#8dbb3a" stroke-width="1.2"/><path d="M-19 -28 V-8 A19 7.5 0 0 0 19 -8 V-28 Z" fill="url(#gTopG)"/><ellipse cx="0" cy="-28" rx="19" ry="7.5" fill="#6f962a" stroke="#8dbb3a" stroke-width="1"/></g><g transform="translate(1393.6 1517) scale(1.0)"><ellipse cx="0" cy="24" rx="31" ry="12" fill="#b50808" stroke="#ff3a3a" stroke-width="1.4"/><ellipse cx="0" cy="19" rx="30" ry="11.5" fill="#b50808" stroke="#ff3a3a" stroke-width="1.2"/><path d="M-27 -6 L-13 2 V27 L-27 17 Z" fill="#e01212" stroke="#ff3a3a" stroke-width="1.2"/><path d="M-13 2 L15 1 V27 L-13 27 Z" fill="#b50808" stroke="#ff3a3a" stroke-width="1.2"/><path d="M15 1 L28 -8 V16 L15 27 Z" fill="#6e0303" stroke="#ff3a3a" stroke-width="1.2"/><path d="M-27 -6 L-13 -14 L14 -16 L28 -8 L15 1 L-13 2 Z" fill="#b50808" stroke="#ff3a3a" stroke-width="1.2"/><path d="M-19 -28 V-8 A19 7.5 0 0 0 19 -8 V-28 Z" fill="url(#gTopR)"/><ellipse cx="0" cy="-28" rx="19" ry="7.5" fill="#e01212" stroke="#ff3a3a" stroke-width="1"/></g></g></svg>
<div class="a" style="left:913px;top:921.5px;width:157.7px;height:44.5px;background:#fff;"></div>
<span class="t" style="left:918.0px;top:927.5px;font-family:'Liberation Sans', sans-serif;font-size:32px;color:#111;transform:scaleX(0.9927);">Member 4</span>
<div class="a" style="left:1103px;top:1315px;width:179.3px;height:43.6px;background:#fff;"></div>
<span class="t" style="left:1110.3px;top:1319.8px;font-family:'Liberation Sans', sans-serif;font-size:32px;color:#111;transform:scaleX(0.9905);">Member 25</span>
<span class="t" style="left:1387.4px;top:1127.9px;font-family:'Liberation Sans', sans-serif;font-size:32px;color:#111;transform:scaleX(0.9900);">Member 4</span>
<span class="t" style="left:1562.4px;top:1124.3px;font-family:'Liberation Sans', sans-serif;font-size:32px;color:#111;">Member 25</span>
<div class="a" style="left:2259px;top:347px;width:1491px;height:1622px;background:#fff;"></div>
<div class="a" style="left:3747.6px;top:411px;width:2.4px;height:1411.5px;background:#adadad;"></div>
<div class="a" style="left:3748px;top:1835px;width:2px;height:134px;background:#efefef;"></div>
<div class="a" style="left:2259px;top:346.5px;width:1491px;height:64.5px;background:#f26f21;"></div>
<div class="a" style="left:3005px;top:356px;width:165px;height:55px;background:#f0f0f0;"></div>
<span class="t" style="left:2301.0px;top:371.5px;font-family:'Liberation Sans', sans-serif;font-size:29px;color:#fff;transform:scaleX(0.9537);">Analysis</span>
<span class="t" style="left:2467.0px;top:371.5px;font-family:'Liberation Sans', sans-serif;font-size:29px;color:#fff;transform:scaleX(1.0341);">Local deformation</span>
<span class="t" style="left:2768.0px;top:371.5px;font-family:'Liberation Sans', sans-serif;font-size:29px;color:#fff;transform:scaleX(0.9428);">Plates</span>
<span class="t" style="left:2908.0px;top:371.5px;font-family:'Liberation Sans', sans-serif;font-size:29px;color:#fff;transform:scaleX(0.9925);">Bolts</span>
<span class="t" style="left:3201.0px;top:371.5px;font-family:'Liberation Sans', sans-serif;font-size:29px;color:#fff;transform:scaleX(0.9667);">Welds</span>
<span class="t" style="left:3340.7px;top:371.5px;font-family:'Liberation Sans', sans-serif;font-size:29px;color:#fff;transform:scaleX(1.0045);">Concrete block</span>
<span class="t" style="left:3598.5px;top:371.5px;font-family:'Liberation Sans', sans-serif;font-size:29px;color:#fff;transform:scaleX(0.9239);">Shear</span>
<span class="t" style="left:3035.0px;top:371.5px;font-family:'Liberation Sans', sans-serif;font-size:29px;color:#f26f21;transform:scaleX(0.9681);">Anchors</span>
<span class="t" style="left:2297.7px;top:451.3px;font-family:'Liberation Sans', sans-serif;font-size:30px;font-weight:bold;color:#f26f21;transform:scaleX(1.0377);">Check of anchors for extreme load effect</span>
<div class="a" style="left:2286px;top:496.3px;width:1375.3px;height:120.2px;background:#f0f0f0;"></div>
<div class="a" style="left:2286px;top:616.5px;width:1375.3px;height:75.5px;background:#ebebeb;"></div>
<svg style="left:0;top:0" width="3750" height="1969" viewBox="0 0 3750 1969" fill="none"><defs><radialGradient id="gOk" cx="0.5" cy="0.35" r="0.75"><stop offset="0" stop-color="#5fd85a"/><stop offset="0.7" stop-color="#3cc13b"/><stop offset="1" stop-color="#35a535"/></radialGradient><radialGradient id="gBad" cx="0.5" cy="0.35" r="0.75"><stop offset="0" stop-color="#fb8a5a"/><stop offset="0.7" stop-color="#f2643a"/><stop offset="1" stop-color="#e2532c"/></radialGradient></defs><path d="M2356.8 496.3 V616.5" stroke="#a6a6a6" stroke-width="2"/><path d="M2431 496.3 V616.5" stroke="#a6a6a6" stroke-width="2"/><path d="M2431 616.5 V692" stroke="#cfcfcf" stroke-width="1.6"/><path d="M2431 1180 V1403.3" stroke="#cfcfcf" stroke-width="1.6"/><path d="M2546.3 496.3 V616.5" stroke="#a6a6a6" stroke-width="2"/><path d="M2546.3 616.5 V692" stroke="#cfcfcf" stroke-width="1.6"/><path d="M2546.3 1180 V1403.3" stroke="#cfcfcf" stroke-width="1.6"/><path d="M2640 496.3 V616.5" stroke="#a6a6a6" stroke-width="2"/><path d="M2640 616.5 V692" stroke="#cfcfcf" stroke-width="1.6"/><path d="M2640 1180 V1403.3" stroke="#cfcfcf" stroke-width="1.6"/><path d="M2759.6 496.3 V616.5" stroke="#a6a6a6" stroke-width="2"/><path d="M2759.6 616.5 V692" stroke="#cfcfcf" stroke-width="1.6"/><path d="M2759.6 1180 V1403.3" stroke="#cfcfcf" stroke-width="1.6"/><path d="M2857 496.3 V616.5" stroke="#a6a6a6" stroke-width="2"/><path d="M2857 616.5 V692" stroke="#cfcfcf" stroke-width="1.6"/><path d="M2857 1180 V1403.3" stroke="#cfcfcf" stroke-width="1.6"/><path d="M2955.3 496.3 V616.5" stroke="#a6a6a6" stroke-width="2"/><path d="M2955.3 616.5 V692" stroke="#cfcfcf" stroke-width="1.6"/><path d="M2955.3 1180 V1403.3" stroke="#cfcfcf" stroke-width="1.6"/><path d="M3078.3 496.3 V616.5" stroke="#a6a6a6" stroke-width="2"/><path d="M3078.3 616.5 V692" stroke="#cfcfcf" stroke-width="1.6"/><path d="M3078.3 1180 V1403.3" stroke="#cfcfcf" stroke-width="1.6"/><path d="M3213 496.3 V616.5" stroke="#a6a6a6" stroke-width="2"/><path d="M3213 616.5 V692" stroke="#cfcfcf" stroke-width="1.6"/><path d="M3213 1180 V1403.3" stroke="#cfcfcf" stroke-width="1.6"/><path d="M3310.8 496.3 V616.5" stroke="#a6a6a6" stroke-width="2"/><path d="M3310.8 616.5 V692" stroke="#cfcfcf" stroke-width="1.6"/><path d="M3310.8 1180 V1403.3" stroke="#cfcfcf" stroke-width="1.6"/><path d="M3408.7 496.3 V616.5" stroke="#a6a6a6" stroke-width="2"/><path d="M3408.7 616.5 V692" stroke="#cfcfcf" stroke-width="1.6"/><path d="M3408.7 1180 V1403.3" stroke="#cfcfcf" stroke-width="1.6"/><path d="M3506.2 496.3 V616.5" stroke="#a6a6a6" stroke-width="2"/><path d="M3506.2 616.5 V692" stroke="#cfcfcf" stroke-width="1.6"/><path d="M3506.2 1180 V1403.3" stroke="#cfcfcf" stroke-width="1.6"/><path d="M2356.8 616.5 V1403.3" stroke="#a6a6a6" stroke-width="2"/><path d="M2286 616.5 H3661.3" stroke="#a6a6a6" stroke-width="2"/><path d="M2286 1180 H3661.3" stroke="#cfcfcf" stroke-width="1.6"/><path d="M2286 1331.5 H3661.3" stroke="#cfcfcf" stroke-width="1.6"/><path d="M2286 1331.5 H2356.8" stroke="#a6a6a6" stroke-width="2"/><rect x="2286" y="496.3" width="1375.3000000000002" height="907.0" stroke="#9a9a9a" stroke-width="2.4"/><rect x="2374.3" y="634.8" width="42" height="41.5" fill="#fff" stroke="#adadad" stroke-width="1.6"/><path d="M2383.3 655.5999999999999 H2407.3" stroke="#222" stroke-width="3.6"/><rect x="2374" y="1198.5" width="42" height="41.5" fill="#fff" stroke="#adadad" stroke-width="1.6"/><path d="M2383 1219.3 H2407" stroke="#222" stroke-width="3.6"/><path d="M2395 1207.3 V1231.3" stroke="#222" stroke-width="3.6"/><rect x="2374" y="1272.5" width="42" height="41.5" fill="#fff" stroke="#adadad" stroke-width="1.6"/><path d="M2383 1293.3 H2407" stroke="#222" stroke-width="3.6"/><path d="M2395 1281.3 V1305.3" stroke="#222" stroke-width="3.6"/><rect x="2374" y="1348.5" width="42" height="41.5" fill="#fff" stroke="#adadad" stroke-width="1.6"/><path d="M2383 1369.3 H2407" stroke="#222" stroke-width="3.6"/><path d="M2395 1357.3 V1381.3" stroke="#222" stroke-width="3.6"/><circle cx="2491" cy="658" r="19.5" fill="url(#gBad)"/><path d="M2484 651 L2498 665 M2498 651 L2484 665" stroke="#fff" stroke-width="5.6" fill="none" stroke-linecap="round"/><circle cx="2490.5" cy="1221" r="19.5" fill="url(#gBad)"/><path d="M2483.5 1214 L2497.5 1228 M2497.5 1214 L2483.5 1228" stroke="#fff" stroke-width="5.6" fill="none" stroke-linecap="round"/><circle cx="2490.5" cy="1295.7" r="19.5" fill="url(#gOk)"/><path d="M2480.0 1296.2 L2487.0 1303.7 L2502.0 1288.7" stroke="#fff" stroke-width="5.2" fill="none" stroke-linecap="round" stroke-linejoin="round"/><circle cx="2490.5" cy="1371.6" r="19.5" fill="url(#gOk)"/><path d="M2480.0 1372.1 L2487.0 1379.6 L2502.0 1364.6" stroke="#fff" stroke-width="5.2" fill="none" stroke-linecap="round" stroke-linejoin="round"/><circle cx="3583.3" cy="657" r="19.5" fill="url(#gOk)"/><path d="M3572.8 657.5 L3579.8 665 L3594.8 650" stroke="#fff" stroke-width="5.2" fill="none" stroke-linecap="round" stroke-linejoin="round"/><circle cx="3583.3" cy="1221" r="19.5" fill="url(#gOk)"/><path d="M3572.8 1221.5 L3579.8 1229 L3594.8 1214" stroke="#fff" stroke-width="5.2" fill="none" stroke-linecap="round" stroke-linejoin="round"/><circle cx="3583.3" cy="1295.7" r="19.5" fill="url(#gOk)"/><path d="M3572.8 1296.2 L3579.8 1303.7 L3594.8 1288.7" stroke="#fff" stroke-width="5.2" fill="none" stroke-linecap="round" stroke-linejoin="round"/><circle cx="3583.3" cy="1371.6" r="19.5" fill="url(#gOk)"/><path d="M3572.8 1372.1 L3579.8 1379.6 L3594.8 1364.6" stroke="#fff" stroke-width="5.2" fill="none" stroke-linecap="round" stroke-linejoin="round"/><path d="M2315 890.5 L2329 901.5 L2315 912.5" stroke="#2a2a2a" stroke-width="3"/><rect x="3623" y="694" width="37" height="456" fill="#f1f1f1"/><rect x="2358" y="1150.5" width="1302" height="28.5" fill="#f1f1f1"/><path d="M3627 722 L3640 706 L3653 722 Z M3627 1117 L3640 1133.5 L3653 1117 Z M2387 1152.5 L2369 1164 L2387 1175 Z M3592 1152.5 L3610 1164 L3592 1175 Z" fill="#8a8a8a"/><rect x="3630.5" y="1052.5" width="18.5" height="42" rx="9" fill="#8a8a8a"/><rect x="2402.5" y="1155" width="842" height="17.5" rx="8.7" fill="#8a8a8a"/><path d="M2415 808.8 H2511.5 M2625 808.8 H2717" stroke="#333" stroke-width="1.6"/><rect x="2287" y="1597.6" width="333.7" height="121.40000000000009" fill="#f0f0f0"/><path d="M2357.6 1597.6 V1795 M2520.8 1597.6 V1795 M2287 1719 H2620.7" stroke="#a6a6a6" stroke-width="2"/><rect x="2287" y="1597.6" width="333.7" height="197.4000000000001" stroke="#9a9a9a" stroke-width="2.4"/></svg>
<span class="t" style="left:2442.4px;top:544.6px;font-family:'Liberation Sans', sans-serif;font-size:28px;font-weight:bold;color:#3a3a3a;">Status</span>
<span class="t" style="left:2558.0px;top:544.6px;font-family:'Liberation Sans', sans-serif;font-size:28px;font-weight:bold;color:#3a3a3a;transform:scaleX(1.0768);">Item</span>
<span class="t" style="left:2652.0px;top:544.6px;font-family:'Liberation Sans', sans-serif;font-size:28px;font-weight:bold;color:#3a3a3a;transform:scaleX(0.9822);">Loads</span>
<span class="t" style="left:3518.8px;top:544.6px;font-family:'Liberation Sans', sans-serif;font-size:28px;font-weight:bold;color:#3a3a3a;transform:scaleX(1.0166);">Detailing</span>
<span class="t" style="left:2771.4px;top:525.7px;font-family:'Liberation Sans', sans-serif;font-size:28px;font-weight:bold;color:#3a3a3a;transform:scaleX(1.3044);">N*</span>
<span class="t" style="left:2811.0px;top:542.4px;font-family:'Liberation Sans', sans-serif;font-size:22px;font-weight:bold;color:#3a3a3a;transform:scaleX(1.2964);">tf</span>
<span class="t" style="left:2868.0px;top:525.7px;font-family:'Liberation Sans', sans-serif;font-size:28px;font-weight:bold;color:#3a3a3a;transform:scaleX(1.0819);">V*</span>
<span class="t" style="left:2966.8px;top:525.7px;font-family:'Liberation Sans', sans-serif;font-size:28px;font-weight:bold;color:#3a3a3a;transform:scaleX(0.9874);">ϕN</span>
<span class="t" style="left:3008.5px;top:541.8px;font-family:'Liberation Sans', sans-serif;font-size:22px;font-weight:bold;color:#3a3a3a;transform:scaleX(1.1079);">Rk,c</span>
<span class="t" style="left:3090.0px;top:525.7px;font-family:'Liberation Sans', sans-serif;font-size:28px;font-weight:bold;color:#3a3a3a;transform:scaleX(0.9579);">ϕV</span>
<span class="t" style="left:3129.0px;top:541.8px;font-family:'Liberation Sans', sans-serif;font-size:22px;font-weight:bold;color:#3a3a3a;transform:scaleX(1.0981);">Rk,cp</span>
<span class="t" style="left:3225.0px;top:525.7px;font-family:'Liberation Sans', sans-serif;font-size:28px;font-weight:bold;color:#3a3a3a;transform:scaleX(1.0830);">Ut</span>
<span class="t" style="left:3259.0px;top:541.8px;font-family:'Liberation Sans', sans-serif;font-size:22px;font-weight:bold;color:#3a3a3a;transform:scaleX(1.4465);">t</span>
<span class="t" style="left:3322.9px;top:525.7px;font-family:'Liberation Sans', sans-serif;font-size:28px;font-weight:bold;color:#3a3a3a;transform:scaleX(1.0864);">Ut</span>
<span class="t" style="left:3357.0px;top:541.8px;font-family:'Liberation Sans', sans-serif;font-size:22px;font-weight:bold;color:#3a3a3a;transform:scaleX(0.9469);">s</span>
<span class="t" style="left:3421.0px;top:525.7px;font-family:'Liberation Sans', sans-serif;font-size:28px;font-weight:bold;color:#3a3a3a;transform:scaleX(1.0830);">Ut</span>
<span class="t" style="left:3455.0px;top:541.8px;font-family:'Liberation Sans', sans-serif;font-size:22px;font-weight:bold;color:#3a3a3a;transform:scaleX(1.0735);">ts</span>
<span class="t" style="left:2771.0px;top:573.7px;font-family:'Liberation Sans', sans-serif;font-size:24px;color:#444;transform:scaleX(1.1999);">[kN]</span>
<span class="t" style="left:2868.0px;top:573.7px;font-family:'Liberation Sans', sans-serif;font-size:24px;color:#444;transform:scaleX(1.1999);">[kN]</span>
<span class="t" style="left:2966.8px;top:573.7px;font-family:'Liberation Sans', sans-serif;font-size:24px;color:#444;transform:scaleX(1.1999);">[kN]</span>
<span class="t" style="left:3090.0px;top:573.7px;font-family:'Liberation Sans', sans-serif;font-size:24px;color:#444;transform:scaleX(1.1999);">[kN]</span>
<span class="t" style="left:3225.0px;top:573.7px;font-family:'Liberation Sans', sans-serif;font-size:24px;color:#444;transform:scaleX(1.1186);">[%]</span>
<span class="t" style="left:3322.9px;top:573.7px;font-family:'Liberation Sans', sans-serif;font-size:24px;color:#444;transform:scaleX(1.1186);">[%]</span>
<span class="t" style="left:3421.0px;top:573.7px;font-family:'Liberation Sans', sans-serif;font-size:24px;color:#444;transform:scaleX(1.1186);">[%]</span>
<span class="t" style="left:2558.0px;top:645.0px;font-family:'Liberation Sans', sans-serif;font-size:28px;color:#1c1c1c;transform:scaleX(0.9255);">A1</span>
<span class="t" style="left:2652.0px;top:645.0px;font-family:'Liberation Sans', sans-serif;font-size:28px;color:#1c1c1c;transform:scaleX(0.9303);">ULS1(1)</span>
<span class="t" style="left:2772.0px;top:645.0px;font-family:'Liberation Sans', sans-serif;font-size:28px;color:#1c1c1c;transform:scaleX(0.9174);">30.4</span>
<span class="t" style="left:2869.0px;top:645.0px;font-family:'Liberation Sans', sans-serif;font-size:28px;color:#1c1c1c;transform:scaleX(0.8989);">0.0</span>
<span class="t" style="left:2966.4px;top:645.0px;font-family:'Liberation Sans', sans-serif;font-size:28px;color:#1c1c1c;transform:scaleX(0.9468);">45.6</span>
<span class="t" style="left:3090.5px;top:645.0px;font-family:'Liberation Sans', sans-serif;font-size:28px;color:#1c1c1c;transform:scaleX(0.9489);">120.2</span>
<span class="t" style="left:3226.8px;top:645.0px;font-family:'Liberation Sans', sans-serif;font-size:28px;color:#1c1c1c;transform:scaleX(0.8933);">137.1</span>
<span class="t" style="left:3322.9px;top:645.0px;font-family:'Liberation Sans', sans-serif;font-size:28px;color:#1c1c1c;transform:scaleX(0.8989);">0.0</span>
<span class="t" style="left:3421.8px;top:645.0px;font-family:'Liberation Sans', sans-serif;font-size:28px;color:#1c1c1c;transform:scaleX(0.9275);">160.5</span>
<span class="t" style="left:2558.0px;top:1209.3px;font-family:'Liberation Sans', sans-serif;font-size:28px;color:#1c1c1c;transform:scaleX(0.9635);">A2</span>
<span class="t" style="left:2652.0px;top:1209.3px;font-family:'Liberation Sans', sans-serif;font-size:28px;color:#1c1c1c;transform:scaleX(0.9303);">ULS1(1)</span>
<span class="t" style="left:2772.0px;top:1209.3px;font-family:'Liberation Sans', sans-serif;font-size:28px;color:#1c1c1c;transform:scaleX(0.9174);">32.0</span>
<span class="t" style="left:2869.0px;top:1209.3px;font-family:'Liberation Sans', sans-serif;font-size:28px;color:#1c1c1c;transform:scaleX(0.8989);">0.0</span>
<span class="t" style="left:2966.4px;top:1209.3px;font-family:'Liberation Sans', sans-serif;font-size:28px;color:#1c1c1c;transform:scaleX(0.9468);">45.6</span>
<span class="t" style="left:3090.5px;top:1209.3px;font-family:'Liberation Sans', sans-serif;font-size:28px;color:#1c1c1c;transform:scaleX(0.9489);">120.2</span>
<span class="t" style="left:3226.8px;top:1209.3px;font-family:'Liberation Sans', sans-serif;font-size:28px;color:#1c1c1c;transform:scaleX(0.8933);">137.1</span>
<span class="t" style="left:3322.9px;top:1209.3px;font-family:'Liberation Sans', sans-serif;font-size:28px;color:#1c1c1c;transform:scaleX(0.8989);">0.0</span>
<span class="t" style="left:3421.8px;top:1209.3px;font-family:'Liberation Sans', sans-serif;font-size:28px;color:#1c1c1c;transform:scaleX(0.9275);">160.5</span>
<span class="t" style="left:2558.0px;top:1284.0px;font-family:'Liberation Sans', sans-serif;font-size:28px;color:#1c1c1c;transform:scaleX(0.9635);">A3</span>
<span class="t" style="left:2652.0px;top:1284.0px;font-family:'Liberation Sans', sans-serif;font-size:28px;color:#1c1c1c;transform:scaleX(0.9303);">ULS3(2)</span>
<span class="t" style="left:2772.0px;top:1284.0px;font-family:'Liberation Sans', sans-serif;font-size:28px;color:#1c1c1c;transform:scaleX(0.9174);">15.0</span>
<span class="t" style="left:2869.0px;top:1284.0px;font-family:'Liberation Sans', sans-serif;font-size:28px;color:#1c1c1c;transform:scaleX(0.8989);">0.0</span>
<span class="t" style="left:2966.4px;top:1284.0px;font-family:'Liberation Sans', sans-serif;font-size:28px;color:#1c1c1c;transform:scaleX(0.9468);">46.9</span>
<span class="t" style="left:3090.5px;top:1284.0px;font-family:'Liberation Sans', sans-serif;font-size:28px;color:#1c1c1c;transform:scaleX(0.9489);">120.2</span>
<span class="t" style="left:3226.8px;top:1284.0px;font-family:'Liberation Sans', sans-serif;font-size:28px;color:#1c1c1c;transform:scaleX(0.9174);">65.7</span>
<span class="t" style="left:3322.9px;top:1284.0px;font-family:'Liberation Sans', sans-serif;font-size:28px;color:#1c1c1c;transform:scaleX(0.8989);">0.0</span>
<span class="t" style="left:3421.8px;top:1284.0px;font-family:'Liberation Sans', sans-serif;font-size:28px;color:#1c1c1c;transform:scaleX(0.9174);">53.2</span>
<span class="t" style="left:2558.0px;top:1359.9px;font-family:'Liberation Sans', sans-serif;font-size:28px;color:#1c1c1c;transform:scaleX(0.9781);">A4</span>
<span class="t" style="left:2652.0px;top:1359.9px;font-family:'Liberation Sans', sans-serif;font-size:28px;color:#1c1c1c;transform:scaleX(0.9303);">ULS3(2)</span>
<span class="t" style="left:2772.0px;top:1359.9px;font-family:'Liberation Sans', sans-serif;font-size:28px;color:#1c1c1c;transform:scaleX(0.9174);">15.8</span>
<span class="t" style="left:2869.0px;top:1359.9px;font-family:'Liberation Sans', sans-serif;font-size:28px;color:#1c1c1c;transform:scaleX(0.8989);">0.0</span>
<span class="t" style="left:2966.4px;top:1359.9px;font-family:'Liberation Sans', sans-serif;font-size:28px;color:#1c1c1c;transform:scaleX(0.9468);">46.9</span>
<span class="t" style="left:3090.5px;top:1359.9px;font-family:'Liberation Sans', sans-serif;font-size:28px;color:#1c1c1c;transform:scaleX(0.9489);">120.2</span>
<span class="t" style="left:3226.8px;top:1359.9px;font-family:'Liberation Sans', sans-serif;font-size:28px;color:#1c1c1c;transform:scaleX(0.9174);">65.7</span>
<span class="t" style="left:3322.9px;top:1359.9px;font-family:'Liberation Sans', sans-serif;font-size:28px;color:#1c1c1c;transform:scaleX(0.8989);">0.0</span>
<span class="t" style="left:3421.8px;top:1359.9px;font-family:'Liberation Sans', sans-serif;font-size:28px;color:#1c1c1c;transform:scaleX(0.9174);">53.2</span>
<span class="t" style="left:2383.0px;top:731.4px;font-family:'Liberation Sans', sans-serif;font-size:27.4px;font-weight:bold;color:#111;transform:scaleX(1.0677);">Combined tension and shear loading in concrete</span>
<span class="t" style="left:2398.0px;top:792.9px;font-family:'Liberation Serif', serif;font-size:36px;color:#222;">(</span>
<span class="t" style="left:2448.0px;top:780.7px;font-family:'Liberation Serif', serif;font-size:23px;font-style:italic;color:#222;">N</span>
<span class="t" style="left:2467.0px;top:781.4px;font-family:'Liberation Serif', serif;font-size:15px;color:#222;">*</span>
<span class="t" style="left:2417.0px;top:813.4px;font-family:'Liberation Serif', serif;font-size:23px;font-style:italic;color:#222;">ϕ</span>
<span class="t" style="left:2430.0px;top:823.6px;font-family:'Liberation Serif', serif;font-size:16px;font-style:italic;color:#222;">M</span>
<span class="t" style="left:2444.7px;top:829.5px;font-family:'Liberation Serif', serif;font-size:12px;font-style:italic;color:#222;">c</span>
<span class="t" style="left:2458.0px;top:813.4px;font-family:'Liberation Serif', serif;font-size:23px;font-style:italic;color:#222;">N</span>
<span class="t" style="left:2479.0px;top:823.6px;font-family:'Liberation Serif', serif;font-size:16px;font-style:italic;color:#222;">R</span>
<span class="t" style="left:2493.0px;top:831.4px;font-family:'Liberation Serif', serif;font-size:12px;font-style:italic;color:#222;">k</span>
<span class="t" style="left:2502.0px;top:836.1px;font-family:'Liberation Serif', serif;font-size:10px;font-style:italic;color:#222;">i</span>
<span class="t" style="left:2514.0px;top:792.9px;font-family:'Liberation Serif', serif;font-size:36px;color:#222;">)</span>
<span class="t" style="left:2531.0px;top:787.6px;font-family:'Liberation Serif', serif;font-size:22px;color:#222;">1.5</span>
<span class="t" style="left:2572.0px;top:792.9px;font-family:'Liberation Serif', serif;font-size:36px;color:#222;">+</span>
<span class="t" style="left:2609.0px;top:792.9px;font-family:'Liberation Serif', serif;font-size:36px;color:#222;">(</span>
<span class="t" style="left:2657.0px;top:780.7px;font-family:'Liberation Serif', serif;font-size:23px;font-style:italic;color:#222;">V</span>
<span class="t" style="left:2676.0px;top:781.4px;font-family:'Liberation Serif', serif;font-size:15px;color:#222;">*</span>
<span class="t" style="left:2626.7px;top:813.4px;font-family:'Liberation Serif', serif;font-size:23px;font-style:italic;color:#222;">ϕ</span>
<span class="t" style="left:2639.8px;top:823.6px;font-family:'Liberation Serif', serif;font-size:16px;font-style:italic;color:#222;">M</span>
<span class="t" style="left:2654.3px;top:829.5px;font-family:'Liberation Serif', serif;font-size:12px;font-style:italic;color:#222;">c</span>
<span class="t" style="left:2667.5px;top:813.4px;font-family:'Liberation Serif', serif;font-size:23px;font-style:italic;color:#222;">V</span>
<span class="t" style="left:2684.0px;top:823.6px;font-family:'Liberation Serif', serif;font-size:16px;font-style:italic;color:#222;">R</span>
<span class="t" style="left:2697.5px;top:831.4px;font-family:'Liberation Serif', serif;font-size:12px;font-style:italic;color:#222;">k</span>
<span class="t" style="left:2706.0px;top:836.1px;font-family:'Liberation Serif', serif;font-size:10px;font-style:italic;color:#222;">i</span>
<span class="t" style="left:2720.0px;top:792.9px;font-family:'Liberation Serif', serif;font-size:36px;color:#222;">)</span>
<span class="t" style="left:2737.0px;top:787.6px;font-family:'Liberation Serif', serif;font-size:22px;color:#222;">1.5</span>
<span class="t" style="left:2778.0px;top:792.9px;font-family:'Liberation Serif', serif;font-size:36px;color:#222;">=</span>
<span class="t" style="left:2845.0px;top:805.0px;font-family:'Liberation Sans', sans-serif;font-size:27.5px;color:#222;transform:scaleX(1.0088);">1.61</span>
<span class="t" style="left:2931.0px;top:805.0px;font-family:'Liberation Sans', sans-serif;font-size:27.5px;color:#222;transform:scaleX(1.0584);">&gt;</span>
<span class="t" style="left:2980.0px;top:805.0px;font-family:'Liberation Sans', sans-serif;font-size:27.5px;color:#222;transform:scaleX(1.0096);">1.0</span>
<span class="t" style="left:2481.0px;top:874.9px;font-family:'Liberation Sans', sans-serif;font-size:27.5px;color:#222;transform:scaleX(1.0424);">Where:</span>
<span class="t" style="left:2482.0px;top:916.4px;font-family:'Liberation Serif', serif;font-size:33px;font-style:italic;color:#222;">N</span>
<span class="t" style="left:2508.0px;top:915.6px;font-family:'Liberation Serif', serif;font-size:22px;color:#222;">*</span>
<span class="t" style="left:2481.0px;top:976.7px;font-family:'Liberation Serif', serif;font-size:33px;font-style:italic;color:#222;">ϕ</span>
<span class="t" style="left:2500.0px;top:992.4px;font-family:'Liberation Serif', serif;font-size:21px;font-style:italic;color:#222;">Mc</span>
<span class="t" style="left:2532.0px;top:976.7px;font-family:'Liberation Serif', serif;font-size:33px;font-style:italic;color:#222;">N</span>
<span class="t" style="left:2559.0px;top:989.1px;font-family:'Liberation Serif', serif;font-size:25px;font-style:italic;color:#222;transform:scaleX(1.4402);">Rk,i</span>
<span class="t" style="left:2482.0px;top:1033.4px;font-family:'Liberation Serif', serif;font-size:33px;font-style:italic;color:#222;">V</span>
<span class="t" style="left:2506.0px;top:1032.6px;font-family:'Liberation Serif', serif;font-size:22px;color:#222;">*</span>
<span class="t" style="left:2481.0px;top:1093.8px;font-family:'Liberation Serif', serif;font-size:33px;font-style:italic;color:#222;">ϕ</span>
<span class="t" style="left:2500.0px;top:1109.4px;font-family:'Liberation Serif', serif;font-size:21px;font-style:italic;color:#222;">Mc</span>
<span class="t" style="left:2532.0px;top:1093.8px;font-family:'Liberation Serif', serif;font-size:33px;font-style:italic;color:#222;">V</span>
<span class="t" style="left:2553.0px;top:1106.1px;font-family:'Liberation Serif', serif;font-size:25px;font-style:italic;color:#222;transform:scaleX(1.4149);">Rk,i</span>
<span class="t" style="left:2657.6px;top:921.7px;font-family:'Liberation Sans', sans-serif;font-size:27.5px;color:#222;transform:scaleX(1.0642);">– design tension force applied to a single fastener or group</span>
<span class="t" style="left:2657.6px;top:981.0px;font-family:'Liberation Sans', sans-serif;font-size:27.5px;color:#222;transform:scaleX(1.0632);">– design tensile strength of fastener or group to failure mode ‘i’</span>
<span class="t" style="left:2657.6px;top:1038.1px;font-family:'Liberation Sans', sans-serif;font-size:27.5px;color:#222;transform:scaleX(1.0644);">– design shear force applied to a single fastener or group</span>
<span class="t" style="left:2657.6px;top:1098.1px;font-family:'Liberation Sans', sans-serif;font-size:27.5px;color:#222;transform:scaleX(1.0644);">– design shear strength of fastener or group to failure mode ‘i’</span>
<span class="t" style="left:2297.8px;top:1541.1px;font-family:'Liberation Sans', sans-serif;font-size:30px;font-weight:bold;color:#f26f21;transform:scaleX(1.0374);">Design data</span>
<span class="t" style="left:2368.4px;top:1646.3px;font-family:'Liberation Sans', sans-serif;font-size:28px;font-weight:bold;color:#3a3a3a;transform:scaleX(1.0785);">Item</span>
<span class="t" style="left:2532.0px;top:1627.7px;font-family:'Liberation Sans', sans-serif;font-size:28px;font-weight:bold;color:#3a3a3a;transform:scaleX(0.9704);">ϕN</span>
<span class="t" style="left:2573.0px;top:1643.4px;font-family:'Liberation Sans', sans-serif;font-size:22px;font-weight:bold;color:#3a3a3a;transform:scaleX(1.6171);">tf</span>
<span class="t" style="left:2532.0px;top:1674.7px;font-family:'Liberation Sans', sans-serif;font-size:24px;color:#444;transform:scaleX(1.2092);">[kN]</span>
<span class="t" style="left:2368.4px;top:1746.1px;font-family:'Liberation Sans', sans-serif;font-size:28px;color:#1c1c1c;transform:scaleX(1.0131);">M16 8.8 - 2</span>
<span class="t" style="left:2532.0px;top:1746.1px;font-family:'Liberation Sans', sans-serif;font-size:28px;color:#1c1c1c;transform:scaleX(0.9468);">83.7</span>
<div class="a" style="left:2259px;top:1822.5px;width:1491px;height:12.5px;background:#cdcdcd;"></div>
<div class="a" style="left:2259px;top:1822.5px;width:1491px;height:1.5px;background:#b4b4b4;"></div>
<div class="a" style="left:2266.6px;top:1843.4px;width:57.6px;height:57px;background:#efefef;border:1.5px solid #c4c4c4;"></div>
<svg style="left:0;top:0" width="3750" height="1969" viewBox="0 0 3750 1969" fill="none"><path d="M2277 1863 V1855 H2285 M2278 1856 L2287 1865 M2305 1855 H2313 V1863 M2312 1856 L2303 1865 M2277 1881 V1889 H2285 M2278 1888 L2287 1879 M2305 1889 H2313 V1881 M2312 1888 L2303 1879" stroke="#6a6a6a" stroke-width="2.6"/><rect x="2640" y="1851" width="281" height="130" fill="#dcdcdc" stroke="#3c3c3c" stroke-width="2"/><path d="M2697 1852 H2752 V1909 L2706 1908 L2695 1921 L2686 1911 L2676 1913 L2685 1898 L2664 1906 L2650 1896 L2652 1868 L2672 1861 L2677 1868 L2686 1870 L2691 1877 L2699 1868 Z" fill="#94e432"/><path d="M2809 1852 H2864 L2868 1862 L2879 1867 L2874 1874 L2888 1867 L2920 1866 V1893 L2901 1889 L2893 1902 L2886 1899 L2890 1911 L2875 1924 L2858 1916 L2848 1896 L2809 1895 Z" fill="#94e432"/><path d="M2850 1883 L2856 1890 L2850 1897 Z M2862 1883 L2856 1890 L2862 1897 Z" fill="#e8e8e8"/><circle cx="2678" cy="1890.6" r="10.5" fill="#a9a9a9" stroke="#dcdcdc" stroke-width="1.5"/><circle cx="2881.7" cy="1890.6" r="10.5" fill="#000"/></svg>
<span class="t" style="left:2674.8px;top:1884.6px;font-family:'Liberation Sans', sans-serif;font-size:12px;font-weight:bold;color:#444;">2</span>
<span class="t" style="left:2878.5px;top:1884.6px;font-family:'Liberation Sans', sans-serif;font-size:12px;font-weight:bold;color:#fff;">1</span>
<svg style="left:0;top:0" width="3750" height="1969" viewBox="0 0 3750 1969" fill="none"><g stroke="#ff0000" stroke-width="12.2" stroke-linejoin="round"><path d="M1668 80 L3006 382" stroke-linecap="butt"/><path d="M2978 357 L3006.5 382.2 L2970 396" stroke-linecap="round"/><path d="M3095.1 441.9 L2437.5 664.8" stroke-linecap="butt"/><path d="M2461 637 L2436.8 665.4 L2472.8 674.8" stroke-linecap="round"/></g><g stroke="#ff3233" stroke-width="12"><rect x="1490" y="30" width="172" height="92.6" rx="24"/><rect x="3012" y="331.8" width="165.8" height="102.6" rx="23"/><rect x="2360.4" y="620" width="69" height="90.8" rx="21"/><rect x="2361" y="724.5" width="756.5" height="137.1" rx="23"/></g></svg>
<div class="a" style="left:0px;top:0px;width:3750px;height:2px;background:#1b1b1b;"></div>
<div class="a" style="left:0px;top:0px;width:2.5px;height:1969px;background:#1b1b1b;"></div>
</body>
</html>
